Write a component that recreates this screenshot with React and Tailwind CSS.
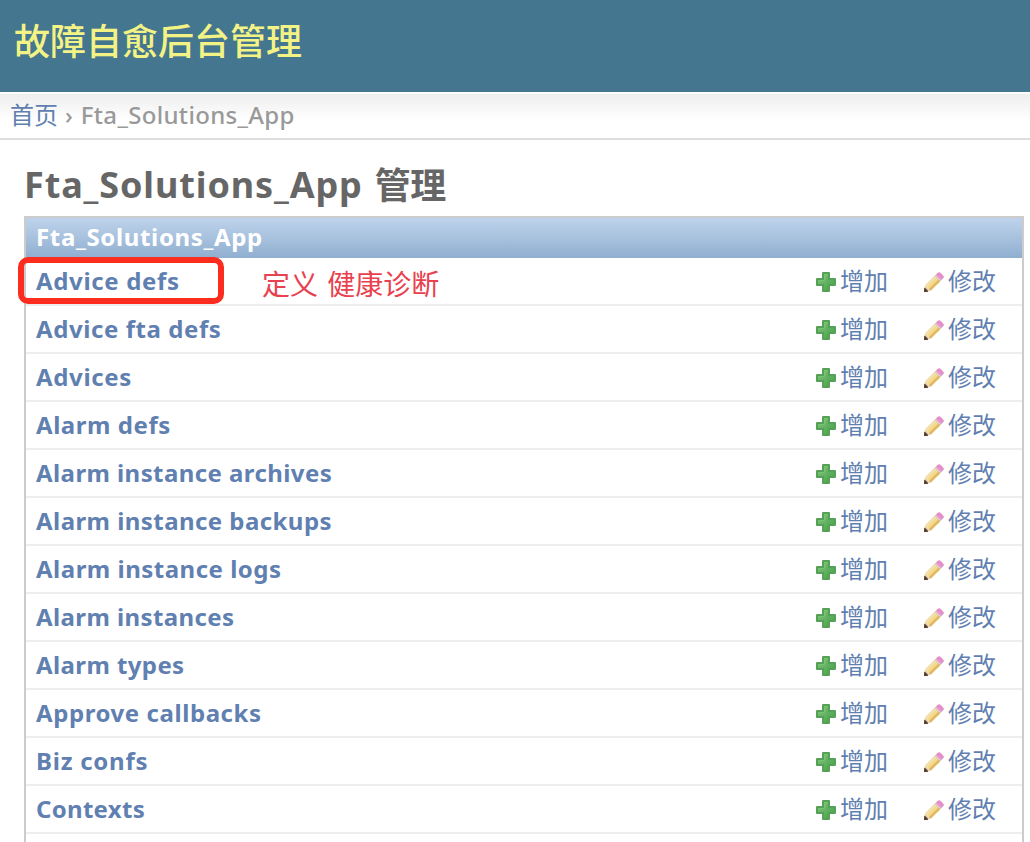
const models = [
  { name: 'Advice defs', spacing: 'tracking-[0.66px]' },
  { name: 'Advice fta defs', spacing: 'tracking-[0.58px]' },
  { name: 'Advices', spacing: 'tracking-[0.65px]' },
  { name: 'Alarm defs', spacing: 'tracking-[0.55px]' },
  { name: 'Alarm instance archives', spacing: 'tracking-[0.42px]' },
  { name: 'Alarm instance backups', spacing: 'tracking-[0.44px]' },
  { name: 'Alarm instance logs', spacing: 'tracking-[0.5px]' },
  { name: 'Alarm instances', spacing: 'tracking-[0.4px]' },
  { name: 'Alarm types', spacing: 'tracking-[0.4px]' },
  { name: 'Approve callbacks', spacing: 'tracking-[0.57px]' },
  { name: 'Biz confs', spacing: 'tracking-[0.75px]' },
  { name: 'Contexts', spacing: 'tracking-[0.3px]' },
];

function AddIcon() {
  return (
    <svg className="mt-0.5 h-5 w-5 shrink-0" viewBox="0 0 20 20" aria-hidden="true">
      <defs>
        <linearGradient id="plus" x1="0" y1="0" x2="1" y2="1">
          <stop offset="0" stopColor="#86c886" />
          <stop offset="0.5" stopColor="#62b262" />
          <stop offset="1" stopColor="#459d45" />
        </linearGradient>
      </defs>
      <path d="M7 1h6v6h6v6h-6v6H7v-6H1V7h6z" fill="url(#plus)" stroke="#55a156" strokeWidth="2" strokeLinejoin="round" />
      <path d="M8.5 2.5h3M2.5 8.5h6v-6" fill="none" stroke="#7cc27c" strokeWidth="1" />
    </svg>
  );
}

function EditIcon() {
  return (
    <svg className="mt-0.5 h-5 w-5 shrink-0" viewBox="0 0 20 20" aria-hidden="true">
      <path d="M0.5 19.5 1.2 13.3 6.7 18.8z" fill="#ecd3b4" />
      <path d="M1.2 13.3 11 3.5l5.5 5.5L6.7 18.8z" fill="#f6d985" />
      <path d="M1.2 13.3 11 3.5l1.8 1.8L3 15.1z" fill="#f3dfae" />
      <path d="M4.9 17 14.7 7.2l1.8 1.8L6.7 18.8z" fill="#dfb868" />
      <path d="m10.6 3.9 1.7-1.7 5.5 5.5-1.7 1.7z" fill="#d9c3d3" />
      <path d="m12 2.5 1.7-1.7q1.4-1.3 2.8 0l2.7 2.7q1.3 1.4 0 2.8l-1.7 1.7z" fill="#e78fc8" />
      <path d="M0 20v-3.5l.8-.9 3.6 3.7L3.5 20z" fill="#58432f" />
    </svg>
  );
}

function ModelRow({ model, marked }) {
  return (
    <li className="relative flex h-12 shrink-0 items-center border-b-2 border-[#eeeeee] pl-[10px]">
      <a className={`grow whitespace-pre text-2xl leading-[30px] font-bold text-[#5f80b0] ${model.spacing}`}>{model.name}</a>
      <a className="flex w-[108px] items-center gap-1 text-2xl leading-[30px] text-[#5f80b0]">
        <AddIcon />
        <span className="whitespace-nowrap">增加</span>
      </a>
      <a className="flex w-[98px] items-center gap-1 text-2xl leading-[30px] text-[#5f80b0]">
        <EditIcon />
        <span className="whitespace-nowrap">修改</span>
      </a>
      {marked && (
        <>
          <span className="absolute -top-px -left-[8px] h-[47px] w-[206px] rounded-[10px] border-[6px] border-[#fc2d1f]" />
          <span className="absolute top-[6px] left-[236px] whitespace-pre text-[28px] leading-10 font-normal text-[#e8414f] [word-spacing:2px]">定义 健康诊断</span>
        </>
      )}
    </li>
  );
}

export default function App() {
  return (
    <div className="flex h-[842px] w-[1030px] flex-col overflow-hidden bg-white font-['Noto_Sans','Noto_Sans_CJK_SC',sans-serif]">
      <header className="flex h-[92px] shrink-0 items-start bg-[#44768f] pt-[18px] pl-[14px]">
        <h1 className="text-[36px] leading-[48px] font-medium text-[#f3f285]">故障自愈后台管理</h1>
      </header>
      <nav className="mt-0.5 flex h-[46px] shrink-0 items-center border-b-2 border-[#dddddd] bg-linear-to-b from-[#eeeeee] to-white to-60% pb-0.5 pl-[10px] text-2xl leading-[30px] font-medium text-[#999999]">
        <a className="font-normal text-[#5f80b0]">首页</a>
        <span className="mr-2 ml-[7px]">›</span>
        <span className="tracking-[0.33px]">Fta_Solutions_App</span>
      </nav>
      <main className="flex min-h-0 grow flex-col pt-[21px] pr-1.5 pl-6">
        <h2 className="flex h-[55px] shrink-0 gap-3 whitespace-pre text-[36px] leading-[48px] font-bold text-[#666666]">
          <span className="tracking-[0.88px]">Fta_Solutions_App</span>
          <span className="relative top-px -tracking-[0.5px]">管理</span>
        </h2>
        <section className="flex min-h-0 grow flex-col border-x-2 border-t-2 border-[#cccccc]">
          <h3 className="flex h-10 shrink-0 items-center bg-linear-to-b from-[#bfd3eb] to-[#90afd0] pb-0.5 pl-[10px] text-2xl leading-[30px] font-bold text-white">
            <span className="tracking-[0.65px]">Fta_Solutions_App</span>
          </h3>
          <ul className="flex flex-col">
            {models.map((model, index) => (
              <ModelRow key={model.name} model={model} marked={index === 0} />
            ))}
          </ul>
        </section>
      </main>
    </div>
  );
}
